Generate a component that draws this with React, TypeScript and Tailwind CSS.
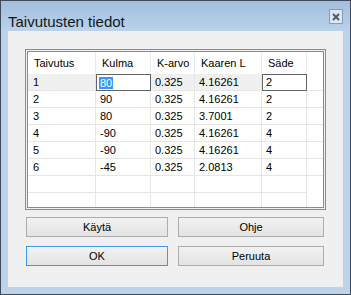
import React from "react";

type Row = { id: string; kulma: string; karvo: string; kaaren: string; sade: string };

const rows: Row[] = [
  { id: "1", kulma: "80", karvo: "0.325", kaaren: "4.16261", sade: "2" },
  { id: "2", kulma: "90", karvo: "0.325", kaaren: "4.16261", sade: "2" },
  { id: "3", kulma: "80", karvo: "0.325", kaaren: "3.7001", sade: "2" },
  { id: "4", kulma: "-90", karvo: "0.325", kaaren: "4.16261", sade: "4" },
  { id: "5", kulma: "-90", karvo: "0.325", kaaren: "4.16261", sade: "4" },
  { id: "6", kulma: "-45", karvo: "0.325", kaaren: "2.0813", sade: "4" },
];

const font = { fontFamily: '"Liberation Sans", Arial, sans-serif' };

function HeaderCell({ w, label }: { w: string; label: string }) {
  return (
    <div className={`${w} flex h-full items-center border-r border-[#e4ecf6] pl-[6px]`}>
      {label}
    </div>
  );
}

function Cell({ w, children }: { w: string; children?: React.ReactNode }) {
  return (
    <div className={`${w} flex h-full items-center border-r border-b border-[#e6e6e6] pl-[4px]`}>
      {children}
    </div>
  );
}

function EditCell({ w, children }: { w: string; children: React.ReactNode }) {
  return (
    <div className={`${w} flex h-full items-center border border-[#646464] bg-white pl-[2px]`}>
      {children}
    </div>
  );
}

function Button({ label, focused }: { label: string; focused?: boolean }) {
  return (
    <div
      className={`flex h-[20px] items-center justify-center border bg-gradient-to-b from-[#f2f2f2] to-[#e3e3e3] text-[11px] text-black ${
        focused ? "border-[#3c99ec]" : "border-[#adadad]"
      }`}
    >
      {label}
    </div>
  );
}

export default function App() {
  return (
    <div
      className="flex h-[295px] w-[351px] flex-col border border-[#3d4b5a] bg-[#bcd3eb]"
      style={font}
    >
      {/* title bar */}
      <div className="relative h-[30px] bg-gradient-to-b from-[#a3bddd] to-[#bad2ea] pl-[7px] pt-[9px]">
        <span className="text-[15px] leading-[17px] text-[#101820]">Taivutusten tiedot</span>
        <div className="absolute right-[7px] top-[8px] flex h-[15px] w-[14px] items-center justify-center border border-[#8a9cb4] bg-[#dbe6f3]">
          <svg width="8" height="8" viewBox="0 0 8 8">
            <path d="M1 1 L7 7 M7 1 L1 7" stroke="#4f5968" strokeWidth="2" />
          </svg>
        </div>
      </div>

      {/* client area */}
      <div className="mx-[7px] mb-[7px] flex flex-1 flex-col bg-[#f0f0f0] px-[17px] pt-[18px] text-[11px] text-black">
        {/* grid */}
        <div className="h-[161px] border border-[#8c8c8c] bg-[#f0f0f0] p-px">
          <div className="flex h-full flex-col overflow-hidden border border-[#8c8c8c] bg-white">
            <div className="flex h-[22px] shrink-0">
              <HeaderCell w="w-[68px]" label="Taivutus" />
              <HeaderCell w="w-[55px]" label="Kulma" />
              <HeaderCell w="w-[44px]" label="K-arvo" />
              <HeaderCell w="w-[67px]" label="Kaaren L" />
              <HeaderCell w="w-[45px]" label="Säde" />
              <div className="flex-1" />
            </div>
            {rows.map((r, i) => (
              <div
                key={r.id}
                className={`flex h-[17px] shrink-0 ${i === 0 ? "bg-[#f0f0f0]" : ""}`}
              >
                <Cell w="w-[68px]">
                  <span className="pl-px">{r.id}</span>
                </Cell>
                {i === 0 ? (
                  <EditCell w="w-[55px]">
                    <span className="bg-[#3399ff] px-px leading-[12px] text-white">{r.kulma}</span>
                  </EditCell>
                ) : (
                  <Cell w="w-[55px]">{r.kulma}</Cell>
                )}
                <Cell w="w-[44px]">{r.karvo}</Cell>
                <Cell w="w-[67px]">{r.kaaren}</Cell>
                {i === 0 ? (
                  <EditCell w="w-[45px]">
                    <span className="pl-px">{r.sade}</span>
                  </EditCell>
                ) : (
                  <Cell w="w-[45px]">{r.sade}</Cell>
                )}
                <div className="flex-1 border-b border-[#e6e6e6] bg-white" />
              </div>
            ))}
            {[0, 1].map((k) => (
              <div key={k} className="flex h-[17px] shrink-0">
                <Cell w="w-[68px]" />
                <Cell w="w-[55px]" />
                <Cell w="w-[44px]" />
                <Cell w="w-[67px]" />
                <Cell w="w-[45px]" />
                <div className="flex-1" />
              </div>
            ))}
          </div>
        </div>

        {/* buttons */}
        <div className="mt-[7px] grid grid-cols-[142px_146px] gap-x-[10px] gap-y-[9px] pl-px">
          <Button label="Käytä" />
          <Button label="Ohje" />
          <Button label="OK" focused />
          <Button label="Peruuta" />
        </div>
      </div>
    </div>
  );
}
